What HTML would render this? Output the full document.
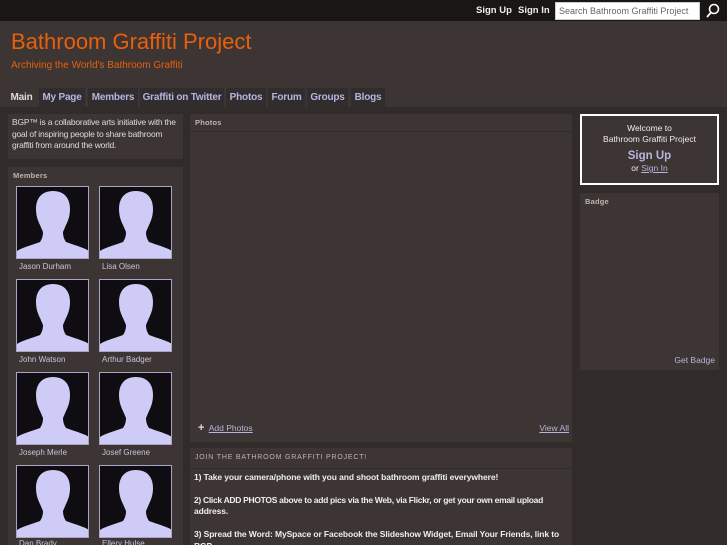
<!DOCTYPE html>
<html><head><style>
*{margin:0;padding:0;box-sizing:border-box}
html,body{width:727px;height:545px;overflow:hidden}
body{background:#312c29;font-family:"Liberation Sans",sans-serif;position:relative}
.abs{position:absolute}
#top{left:0;top:0;width:727px;height:21px;background:#1a1614}
#hdr{left:0;top:21px;width:727px;height:86px;background:#3c3533}
.tab{position:absolute;top:88px;height:19px;background:#312c2d;color:#b8b4e0;font-weight:bold;font-size:10px;line-height:19px;text-align:center;white-space:nowrap;letter-spacing:-.2px}
.box{position:absolute;background:#3c3533}
.ttl{font-size:7.5px;font-weight:bold;color:#bdb5b0;padding:4px 5px;letter-spacing:.2px}
.ph{position:absolute;width:73px;height:73px;border:1px solid #a9a4c8;background:#0f0d12;overflow:hidden}
.nm{position:absolute;font-size:8px;color:#c8c4dc}
a{color:#b8b4e0;text-decoration:underline}
</style></head><body>
<div id="top" class="abs"></div>
<div class="abs" style="left:476px;top:5px;font-size:9.5px;font-weight:bold;color:#eee">Sign Up</div>
<div class="abs" style="left:518px;top:5px;font-size:9.5px;font-weight:bold;color:#eee">Sign In</div>
<div class="abs" style="left:555px;top:2px;width:145px;height:18px;background:#fff;border:1px solid #ccc;font-size:9px;color:#666;padding:3px 3px;white-space:nowrap;overflow:hidden">Search Bathroom Graffiti Project</div>
<svg class="abs" style="left:705px;top:3px" width="15" height="15"><circle cx="9" cy="6" r="4.5" fill="none" stroke="#fff" stroke-width="1.6"/><line x1="6" y1="9.5" x2="2" y2="14" stroke="#fff" stroke-width="1.8"/></svg>
<div id="hdr" class="abs"></div>
<div class="abs" style="left:11px;top:29px;font-size:22px;color:#e8600c">Bathroom Graffiti Project</div>
<div class="abs" style="left:11px;top:60px;font-size:10px;color:#e8600c">Archiving the World's Bathroom Graffiti</div>
<div class="tab" style="left:7px;width:29px;color:#ddd;background:#3c3533">Main</div>
<div class="tab" style="left:39px;width:46px">My Page</div>
<div class="tab" style="left:88px;width:50px">Members</div>
<div class="tab" style="left:140px;width:84px">Graffiti on Twitter</div>
<div class="tab" style="left:226px;width:40px">Photos</div>
<div class="tab" style="left:268px;width:37px">Forum</div>
<div class="tab" style="left:307px;width:41px">Groups</div>
<div class="tab" style="left:351px;width:34px">Blogs</div>

<div class="box" style="left:8px;top:114px;width:175px;height:45px;font-size:8.5px;color:#ddd;line-height:11.5px;padding:3px 4px;letter-spacing:-.2px">BGP™ is a collaborative arts initiative with the goal of inspiring people to share bathroom graffiti from around the world.</div>
<div class="box" style="left:8px;top:167px;width:175px;height:378px"><div class="ttl">Members</div></div>

<div class="box" style="left:190px;top:114px;width:382px;height:328px"><div class="ttl" style="border-bottom:1px solid #332d2b">Photos</div>
<div class="abs" style="left:8px;top:308px;font-size:8.5px;color:#b8b4e0"><b style="color:#ddd;font-size:11px">+</b>&nbsp; <a>Add Photos</a></div>
<div class="abs" style="right:3px;top:309px;font-size:8.5px"><a>View All</a></div></div>
<div class="box" style="left:190px;top:448px;width:382px;height:97px;color:#eee;font-size:8.5px;font-weight:bold;line-height:11.5px">
<div class="ttl" style="font-weight:normal;letter-spacing:.8px;border-bottom:1px solid #332d2b;font-size:7px">JOIN THE BATHROOM GRAFFITI PROJECT!</div>
<div style="padding:3px 3px 3px 4px;letter-spacing:-.1px">1) Take your camera/phone with you and shoot bathroom graffiti everywhere!<br><br><span style="letter-spacing:-.3px">2) Click ADD PHOTOS above to add pics via the Web, via Flickr, or get your own email upload</span><br>address.<br><br>3) Spread the Word: MySpace or Facebook the Slideshow Widget, Email Your Friends, link to BGP...</div></div>

<div class="abs" style="left:580px;top:114px;width:139px;height:71px;border:2px solid #fff;background:#3c3533;text-align:center;color:#eee;font-size:8.5px;line-height:11px;padding-top:7px">Welcome to<br>Bathroom Graffiti Project<div style="font-size:11.5px;font-weight:bold;color:#b8b4e0;margin-top:5px;line-height:13px">Sign Up</div>or <a>Sign In</a></div>
<div class="box" style="left:580px;top:193px;width:139px;height:177px"><div class="ttl">Badge</div>
<div class="abs" style="right:4px;top:162px;font-size:8.5px;color:#b8b4e0">Get Badge</div></div>

<svg width="0" height="0" style="position:absolute"><defs><symbol id="sil" viewBox="0 0 72 72"><path d="M36 4C25 4 19 11 19 22c0 7 2 12 4 16l3 7c0 4-1 7-3 10C15 58 4 61 0 64V72H72V64C68 61 57 58 49 55c-2-3-3-6-3-10l3-7c2-4 4-9 4-16C53 11 47 4 36 4Z" fill="#cfcbf7"/></symbol></defs></svg>
<div class="ph" style="left:16px;top:186px"><svg width="72" height="72"><use href="#sil"/></svg></div>
<div class="ph" style="left:99px;top:186px"><svg width="72" height="72"><use href="#sil"/></svg></div>
<div class="nm" style="left:19px;top:262px">Jason Durham</div><div class="nm" style="left:102px;top:262px">Lisa Olsen</div>
<div class="ph" style="left:16px;top:279px"><svg width="72" height="72"><use href="#sil"/></svg></div>
<div class="ph" style="left:99px;top:279px"><svg width="72" height="72"><use href="#sil"/></svg></div>
<div class="nm" style="left:19px;top:355px">John Watson</div><div class="nm" style="left:102px;top:355px">Arthur Badger</div>
<div class="ph" style="left:16px;top:372px"><svg width="72" height="72"><use href="#sil"/></svg></div>
<div class="ph" style="left:99px;top:372px"><svg width="72" height="72"><use href="#sil"/></svg></div>
<div class="nm" style="left:19px;top:448px">Joseph Merle</div><div class="nm" style="left:102px;top:448px">Josef Greene</div>
<div class="ph" style="left:16px;top:465px"><svg width="72" height="72"><use href="#sil"/></svg></div>
<div class="ph" style="left:99px;top:465px"><svg width="72" height="72"><use href="#sil"/></svg></div>
<div class="nm" style="left:19px;top:539px">Dan Brady</div><div class="nm" style="left:102px;top:539px">Ellery Hulse</div>
</body></html>
